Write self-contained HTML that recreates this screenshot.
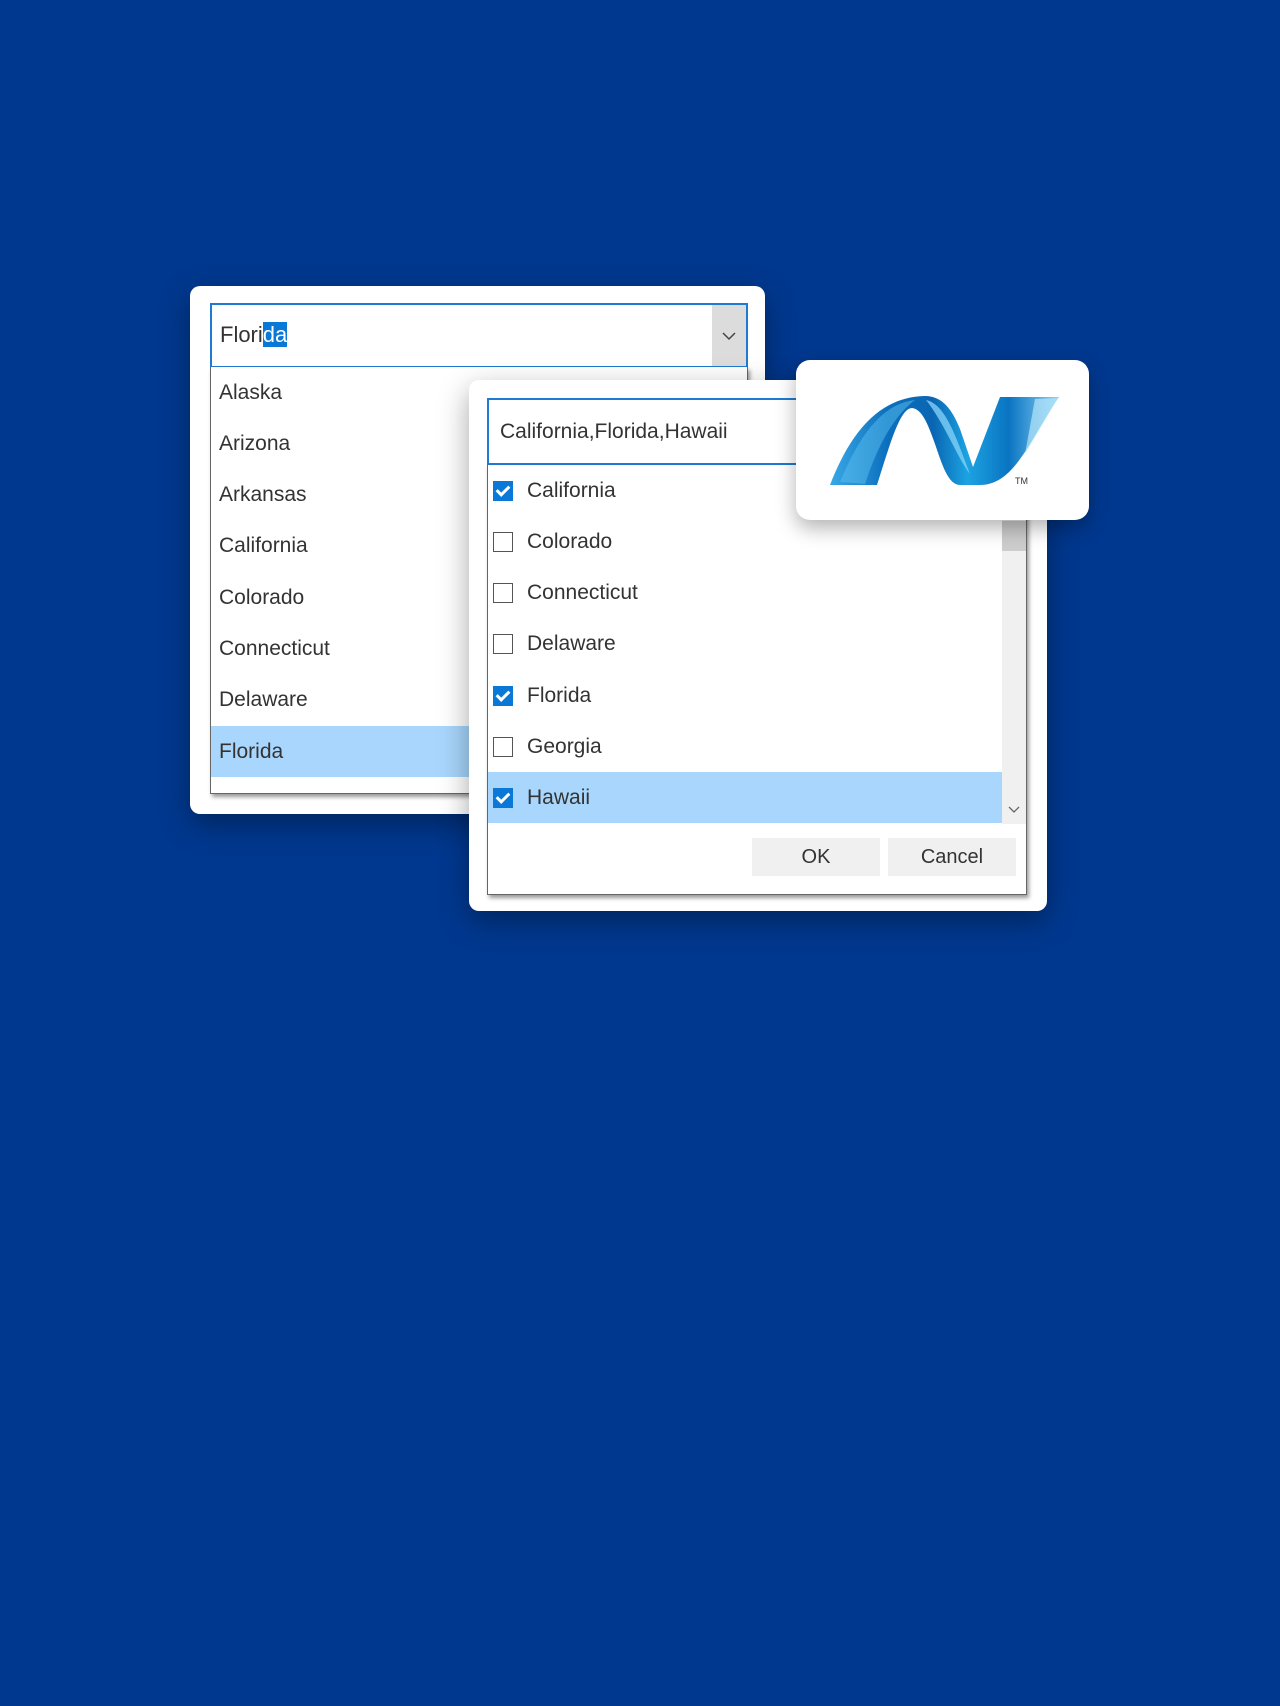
<!DOCTYPE html>
<html><head><meta charset="utf-8"><style>
body{margin:0;width:1280px;height:1706px;background:#00388f;position:relative;overflow:hidden;font-family:"Liberation Sans",Arial,sans-serif;color:#333}
.abs{position:absolute}
.card{background:#fff;border-radius:10px;box-shadow:0 10px 30px rgba(0,0,0,.35)}
.item{position:absolute;left:8px;font-size:21px;height:51px;line-height:51px}
.cb{position:absolute;left:5px;width:18px;height:18px;border:1px solid #555;background:#fff;top:16px}
.cb.on{background:#0a78d7;border-color:#0a78d7}
.cb.on:after{content:"";position:absolute;left:5px;top:1px;width:5px;height:10px;border:solid #fff;border-width:0 3px 3px 0;transform:rotate(45deg)}
.row{position:absolute;left:0;right:0;height:51px}
.row span{position:absolute;left:39px;line-height:51px;font-size:21px}
</style></head><body>

<div class="abs card" style="left:190px;top:286px;width:575px;height:528px"></div>
<div class="abs" style="left:210px;top:303px;width:534px;height:61px;border:2px solid #1f7ad2;background:#fff">
  <div class="abs" style="left:8px;top:17px;font-size:22px">Flori<span style="background:#0a78d7;color:#fff">da</span></div>
  <div class="abs" style="right:0;top:0;width:34px;height:61px;background:#dcdcdc"><svg width="34" height="61"><path d="M11 28 L17 34 L23 28" stroke="#444" stroke-width="1.5" fill="none"/></svg></div>
</div>
<div class="abs" style="left:210px;top:367px;width:536px;height:426px;border:1px solid #666;border-top:0;background:#fff;box-shadow:2px 3px 4px rgba(0,0,0,.4)">
  <div class="abs" style="left:0;top:359px;width:100%;height:51px;background:#a8d6fc"></div>
  <div class="item" style="top:0">Alaska</div>
  <div class="item" style="top:51px">Arizona</div>
  <div class="item" style="top:102px">Arkansas</div>
  <div class="item" style="top:153px">California</div>
  <div class="item" style="top:205px">Colorado</div>
  <div class="item" style="top:256px">Connecticut</div>
  <div class="item" style="top:307px">Delaware</div>
  <div class="item" style="top:359px">Florida</div>
</div>

<div class="abs card" style="left:469px;top:380px;width:578px;height:531px"></div>
<div class="abs" style="left:487px;top:398px;width:538px;height:63px;border:2px solid #1f7ad2;background:#fff">
  <div class="abs" style="left:11px;top:20px;font-size:21px">California,Florida,Hawaii</div>
</div>
<div class="abs" style="left:487px;top:465px;width:538px;height:429px;border:1px solid #666;border-top:0;background:#fff;box-shadow:2px 3px 4px rgba(0,0,0,.4)">
  <div class="abs" style="right:0;top:0;width:24px;height:359px;background:#f0f0f0"></div>
  <div class="abs" style="right:0;top:56px;width:24px;height:30px;background:#cdcdcd"></div>
  <svg class="abs" style="right:6px;top:340px" width="12" height="10"><path d="M1 2 L6 7 L11 2" stroke="#666" stroke-width="1.3" fill="none"/></svg>
  <div class="row" style="top:0;right:24px"><div class="cb on"></div><span>California</span></div>
  <div class="row" style="top:51px;right:24px"><div class="cb"></div><span>Colorado</span></div>
  <div class="row" style="top:102px;right:24px"><div class="cb"></div><span>Connecticut</span></div>
  <div class="row" style="top:153px;right:24px"><div class="cb"></div><span>Delaware</span></div>
  <div class="row" style="top:205px;right:24px"><div class="cb on"></div><span>Florida</span></div>
  <div class="row" style="top:256px;right:24px"><div class="cb"></div><span>Georgia</span></div>
  <div class="row" style="top:307px;right:24px;background:#a8d6fc"><div class="cb on"></div><span>Hawaii</span></div>
  <div class="abs" style="left:264px;top:373px;width:128px;height:38px;background:#f0f0f0;text-align:center;line-height:38px;font-size:20px">OK</div>
  <div class="abs" style="left:400px;top:373px;width:128px;height:38px;background:#f0f0f0;text-align:center;line-height:38px;font-size:20px">Cancel</div>
</div>

<div class="abs card" style="left:796px;top:360px;width:293px;height:160px;border-radius:14px;box-shadow:0 8px 20px rgba(0,0,0,.3)"></div>
<svg class="abs" style="left:830px;top:394px" width="240" height="100" viewBox="0 0 240 100">
  <defs>
    <linearGradient id="g" x1="0" y1="0" x2="1" y2="0">
      <stop offset="0" stop-color="#3aa8e6"/><stop offset=".25" stop-color="#0b6fbd"/><stop offset=".45" stop-color="#0a66b2"/><stop offset=".6" stop-color="#1ca3e2"/><stop offset=".78" stop-color="#0a74c2"/><stop offset="1" stop-color="#8fd3f5"/>
    </linearGradient>
  </defs>
  <path d="M0,91 C18,45 45,3 95,2 C112,2 122,15 130,35 L143,73 L170,3 L229,3 C200,45 185,91 150,91 L130,91 C118,91 112,70 105,50 C98,30 92,15 82,14 C70,14 60,50 47,91 Z" fill="url(#g)"/>
  <path d="M10,88 C28,45 50,10 85,6 C60,25 45,60 35,90 Z" fill="#5cc0f0" opacity=".5"/>
  <path d="M96,6 C115,10 125,40 140,80 C128,65 115,30 96,6 Z" fill="#7fd0f5" opacity=".8"/>
  <path d="M205,5 L228,4 L195,60 Z" fill="#b5e5fa" opacity=".7"/>
  <text x="185" y="90" font-size="9" fill="#333" font-family="Liberation Sans, sans-serif">TM</text>
</svg>
</body></html>
